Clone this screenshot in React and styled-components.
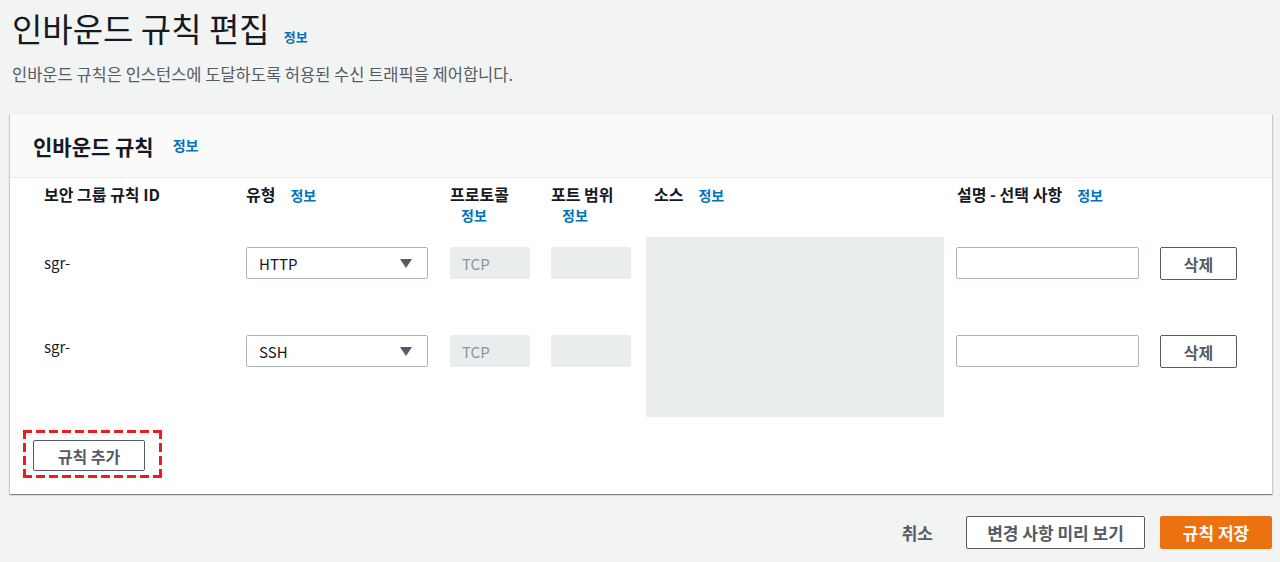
import React from "react";
import styled, { createGlobalStyle } from "styled-components";

const GlobalStyle = createGlobalStyle`
  html, body {
    margin: 0;
    padding: 0;
    background: #f2f3f3;
  }
  body {
    font-family: "Noto Sans CJK KR", "Noto Sans", sans-serif;
    color: #16191f;
  }
  * { box-sizing: border-box; }
`;

const Page = styled.div`
  padding: 8px 8px 0 10px;
  width: 1280px;
  height: 562px;
  overflow: hidden;
`;

const PageHeader = styled.div`
  padding-left: 2px;
`;

const Title = styled.h1`
  margin: 0;
  font-size: 33px;
  line-height: 40px;
  font-weight: 400;
  color: #16191f;
  display: flex;
  align-items: baseline;
  gap: 14px;
`;

const InfoLink = styled.a`
  color: #0073bb;
  font-size: ${(p) => p.$size ?? 14}px;
  font-weight: 700;
  line-height: 21px;
  text-decoration: none;
  cursor: pointer;
  margin-left: ${(p) => p.$ml ?? 0}px;
  display: ${(p) => (p.$block ? "block" : "inline-block")};
`;

const Description = styled.p`
  margin: 15px 0 0;
  font-size: 16.5px;
  line-height: 22px;
  color: #545b64;
`;

const Card = styled.section`
  margin-top: 29px;
  background: #fff;
  box-shadow: 0 1px 1px 0 rgba(0, 28, 36, 0.3), 1px 1px 1px 0 rgba(0, 28, 36, 0.15),
    -1px 1px 1px 0 rgba(0, 28, 36, 0.15);
`;

const CardHeader = styled.div`
  height: 64px;
  background: #fafafa;
  border-bottom: 1px solid #eaeded;
  display: flex;
  align-items: center;
  padding-left: 23px;
  gap: 19px;
`;

const CardTitle = styled.h2`
  margin: 0;
  font-size: 21px;
  line-height: 26px;
  font-weight: 700;
`;

const RulesGrid = styled.div`
  display: grid;
  grid-template-columns: 202px 204px 101px 95px 310px 204px 1fr;
  grid-template-rows: 59px 88px 88px;
  padding-left: 34px;
`;

const HeadCell = styled.div`
  padding-top: 6px;
  padding-left: ${(p) => p.$indent ?? 0}px;
  font-size: 16px;
  line-height: 21px;
  font-weight: 700;
  color: #16191f;
  white-space: nowrap;
`;

const Cell = styled.div`
  padding-top: 10px;
`;

const IdText = styled.div`
  padding-top: ${(p) => p.$pt}px;
  font-size: 15px;
  line-height: 20px;
  color: #16191f;
`;

const SelectBox = styled.div`
  width: 182px;
  height: 32px;
  border: 1px solid #aab7b8;
  border-radius: 2px;
  background: #fff;
  display: flex;
  align-items: center;
  justify-content: space-between;
  padding: 0 15px 0 12px;
  font-size: 15px;
  color: #16191f;
`;

const Caret = styled.span`
  width: 0;
  height: 0;
  border-left: 6px solid transparent;
  border-right: 6px solid transparent;
  border-top: 9px solid #545b64;
`;

const DisabledBox = styled.div`
  width: 80px;
  height: 32px;
  background: #eaeded;
  border-radius: 2px;
  display: flex;
  align-items: center;
  padding-left: 12px;
  font-size: 15px;
  color: #879596;
`;

const SourceArea = styled.div`
  grid-row: 2 / span 2;
  grid-column: 5;
  width: 298px;
  height: 180px;
  background: #eaeded;
`;

const TextInput = styled.div`
  width: 183px;
  height: 32px;
  border: 1px solid #aab7b8;
  border-radius: 2px;
  background: #fff;
`;

const Button = styled.button`
  height: ${(p) => p.$h ?? 32}px;
  width: ${(p) => p.$w}px;
  padding: 0;
  border-radius: 2px;
  border: 1px solid ${(p) => (p.$primary ? "#ec7211" : "#545b64")};
  background: ${(p) => (p.$primary ? "#ec7211" : "#fff")};
  color: ${(p) => (p.$primary ? "#fff" : "#545b64")};
  font-family: inherit;
  font-size: ${(p) => p.$fs ?? 16}px;
  font-weight: 700;
  cursor: pointer;
`;

const CardFooter = styled.div`
  padding: 17px 0 16px 13px;
`;

const dash = "#ee1c1c";

const Annotation = styled.div`
  display: inline-block;
  padding: 10px 17px 7px 10px;
  background:
    repeating-linear-gradient(90deg, ${dash} 0 9px, transparent 9px 13px) top left / 100% 3px no-repeat,
    repeating-linear-gradient(90deg, ${dash} 0 9px, transparent 9px 13px) bottom left / 100% 3px no-repeat,
    repeating-linear-gradient(180deg, ${dash} 0 9px, transparent 9px 13px) top left / 3px 100% no-repeat,
    repeating-linear-gradient(180deg, ${dash} 0 9px, transparent 9px 13px) top right / 3px 100% no-repeat;
`;

const Actions = styled.div`
  display: flex;
  justify-content: flex-end;
  align-items: center;
  margin-top: 22px;
  gap: 15px;
`;

const TextButton = styled.span`
  font-size: 17px;
  font-weight: 700;
  color: #545b64;
  margin-right: 18px;
  cursor: pointer;
`;

const rules = [
  { id: "sgr-", type: "HTTP", pt: 16 },
  { id: "sgr-", type: "SSH", pt: 12 },
];

export default function App() {
  return (
    <>
      <GlobalStyle />
      <Page>
        <PageHeader>
          <Title>
            인바운드 규칙 편집 <InfoLink $size={13}>정보</InfoLink>
          </Title>
          <Description>
            인바운드 규칙은 인스턴스에 도달하도록 허용된 수신 트래픽을 제어합니다.
          </Description>
        </PageHeader>

        <Card>
          <CardHeader>
            <CardTitle>인바운드 규칙</CardTitle>
            <InfoLink>정보</InfoLink>
          </CardHeader>

          <RulesGrid>
            <HeadCell>보안 그룹 규칙 ID</HeadCell>
            <HeadCell>
              유형<InfoLink $ml={15}>정보</InfoLink>
            </HeadCell>
            <HeadCell>
              프로토콜
              <InfoLink $ml={11} $block>
                정보
              </InfoLink>
            </HeadCell>
            <HeadCell>
              포트 범위
              <InfoLink $ml={11} $block>
                정보
              </InfoLink>
            </HeadCell>
            <HeadCell $indent={8}>
              소스<InfoLink $ml={15}>정보</InfoLink>
            </HeadCell>
            <HeadCell $indent={1}>
              설명 - 선택 사항<InfoLink $ml={15}>정보</InfoLink>
            </HeadCell>
            <HeadCell />

            {rules.map((r, i) => (
              <React.Fragment key={i}>
                <IdText $pt={r.pt} style={{ gridRow: i + 2, gridColumn: 1 }}>
                  {r.id}
                </IdText>
                <Cell style={{ gridRow: i + 2, gridColumn: 2 }}>
                  <SelectBox>
                    {r.type}
                    <Caret />
                  </SelectBox>
                </Cell>
                <Cell style={{ gridRow: i + 2, gridColumn: 3 }}>
                  <DisabledBox>TCP</DisabledBox>
                </Cell>
                <Cell style={{ gridRow: i + 2, gridColumn: 4 }}>
                  <DisabledBox />
                </Cell>
                <Cell style={{ gridRow: i + 2, gridColumn: 6 }}>
                  <TextInput />
                </Cell>
                <Cell style={{ gridRow: i + 2, gridColumn: 7 }}>
                  <Button $w={77} $h={33}>삭제</Button>
                </Cell>
              </React.Fragment>
            ))}
            <SourceArea />
          </RulesGrid>

          <CardFooter>
            <Annotation>
              <Button $w={112} $h={31}>규칙 추가</Button>
            </Annotation>
          </CardFooter>
        </Card>

        <Actions>
          <TextButton>취소</TextButton>
          <Button $w={179} $h={33} $fs={17}>변경 사항 미리 보기</Button>
          <Button $w={112} $h={33} $fs={17} $primary>규칙 저장</Button>
        </Actions>
      </Page>
    </>
  );
}
